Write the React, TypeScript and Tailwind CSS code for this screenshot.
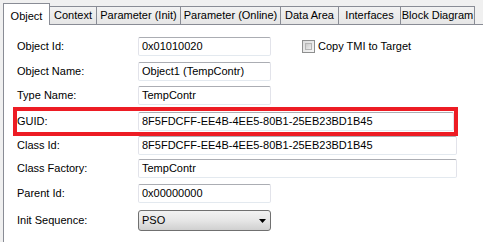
import React from 'react'

const tabs = [
  { label: 'Object', w: 'w-[47px]', active: true },
  { label: 'Context', w: 'w-[47px]' },
  { label: 'Parameter (Init)', w: 'w-[84px]' },
  { label: 'Parameter (Online)', w: 'w-[100px]' },
  { label: 'Data Area', w: 'w-[58px]' },
  { label: 'Interfaces', w: 'w-[62px]' },
  { label: 'Block Diagram', w: 'w-[74px]' },
]

function Field({ value, wide, w }: { value: string; wide?: boolean; w?: string }) {
  return (
    <div
      className={`flex h-[19px] items-center rounded-[2px] border border-[#e2e3ea] border-t-[#abadb3] border-b-[#e3e9ef] bg-white pl-[3px] ${
        w ? w : wide ? 'w-[319px]' : 'w-[133px]'
      }`}
    >
      <span className="leading-none">{value}</span>
    </div>
  )
}

function Row({ label, children, className = '' }: { label: string; children: React.ReactNode; className?: string }) {
  return (
    <div className={`flex items-center ${className}`}>
      <div className="w-[121px] shrink-0">{label}</div>
      {children}
    </div>
  )
}

export default function App() {
  return (
    <div
      className="h-[242px] w-[483px] overflow-hidden bg-[#f0f0f0] text-[11px] text-black"
      style={{ fontFamily: '"Liberation Sans", Arial, sans-serif' }}
    >
      {/* tab strip */}
      <div className="flex h-[24px] items-end pl-[3px]">
        {tabs.map((t) =>
          t.active ? (
            <div
              key={t.label}
              className={`relative z-10 -mb-px flex h-[22px] ${t.w} items-start justify-center border border-b-0 border-[#898c95] bg-white pt-[4px]`}
            >
              {t.label}
            </div>
          ) : (
            <div
              key={t.label}
              className={`flex h-[18px] ${t.w} items-center justify-center border-r border-t border-[#898c95] bg-gradient-to-b from-[#f2f2f2] to-[#e6e6e6] pb-[1px]`}
            >
              {t.label}
            </div>
          ),
        )}
      </div>

      {/* panel */}
      <div className="ml-[3px] h-[218px] border-l border-t border-[#898c95] bg-white pl-[13px]">
        <div className="flex flex-col pt-[12px]">
          <Row label="Object Id:">
            <Field value="0x01010020" />
            <div className="ml-[31px] flex items-center">
              <div className="h-[13px] w-[13px] border border-[#8e8f8f] bg-gradient-to-br from-[#dcdcdc] to-[#f6f6f6] p-[2px]">
                <div className="h-full w-full border border-[#b5b5b5] bg-gradient-to-br from-[#cbcbcb] to-[#eeeeee]" />
              </div>
              <span className="ml-[3px]">Copy TMI to Target</span>
            </div>
          </Row>
          <Row label="Object Name:" className="mt-[6px]">
            <Field value="Object1 (TempContr)" />
          </Row>
          <Row label="Type Name:" className="mt-[5px]">
            <Field value="TempContr" />
          </Row>

          <div className="-ml-[4px] mt-[2px] flex h-[29px] w-[445px] items-center border-[4px] border-[#ed1c24]">
            <div className="w-[121px] shrink-0">GUID:</div>
            <Field value="8F5FDCFF-EE4B-4EE5-80B1-25EB23BD1B45" w="w-[316px]" />
          </div>

          <Row label="Class Id:">
            <Field value="8F5FDCFF-EE4B-4EE5-80B1-25EB23BD1B45" wide />
          </Row>
          <Row label="Class Factory:" className="mt-[4px]">
            <Field value="TempContr" wide />
          </Row>
          <Row label="Parent Id:" className="mt-[6px]">
            <Field value="0x00000000" />
          </Row>
          <Row label="Init Sequence:" className="mt-[7px]">
            <div className="relative flex h-[21px] w-[133px] items-center rounded-[3px] border border-[#707070] bg-gradient-to-b from-[#f2f2f2] via-[#e6e6e6] to-[#d0d0d0] pl-[3px]">
              <span>PSO</span>
              <svg className="absolute right-[4px] top-[8px]" width="7" height="4" viewBox="0 0 7 4">
                <path d="M0 0H7L3.5 4Z" fill="#000" />
              </svg>
            </div>
          </Row>
        </div>
      </div>
    </div>
  )
}
